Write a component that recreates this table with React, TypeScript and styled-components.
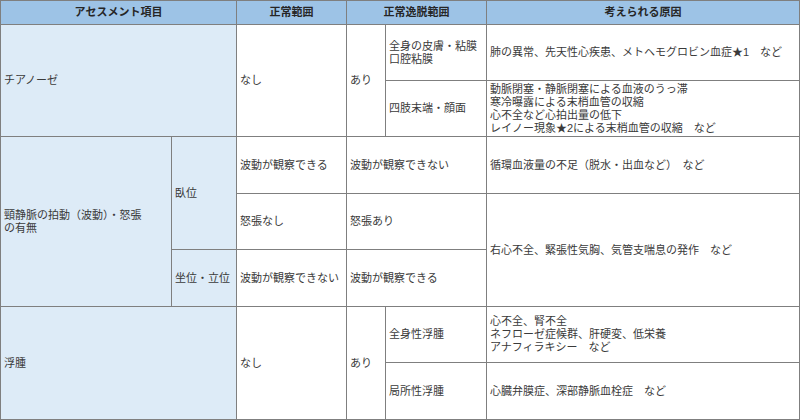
import React from "react";
import styled, { createGlobalStyle } from "styled-components";

const Global = createGlobalStyle`
  html, body { margin: 0; padding: 0; background: #ffffff; }
  body {
    font-family: "Liberation Sans", "Noto Sans CJK JP", sans-serif;
    color: #3a3a3a;
  }
`;

const Grid = styled.div`
  display: grid;
  width: 800px;
  box-sizing: border-box;
  padding: 1px;
  gap: 1px;
  background: #7f7f7f;
  grid-template-columns: 170px 64px 109px 38px 100px 312px;
  grid-template-rows: 23px 55px 55px 56px 55px 56px 55px 56px;
`;

type CellProps = { $col: string; $row: string; $tone?: "head" | "item" | "plain" };

const Cell = styled.div<CellProps>`
  grid-column: ${(p) => p.$col};
  grid-row: ${(p) => p.$row};
  display: flex;
  align-items: center;
  box-sizing: border-box;
  padding: 0 3px;
  font-size: 11px;
  line-height: 13px;
  white-space: nowrap;
  background: ${(p) =>
    p.$tone === "head" ? "#9dc3e6" : p.$tone === "item" ? "#ddebf7" : "#ffffff"};
`;

const Head = styled(Cell)`
  justify-content: center;
  font-weight: 700;
  color: #262626;
`;

const Lines = styled.div`
  display: flex;
  flex-direction: column;
`;

export default function App() {
  return (
    <>
      <Global />
      <Grid>
        <Head $col="1 / 3" $row="1" $tone="head">アセスメント項目</Head>
        <Head $col="3" $row="1" $tone="head">正常範囲</Head>
        <Head $col="4 / 6" $row="1" $tone="head">正常逸脱範囲</Head>
        <Head $col="6" $row="1" $tone="head">考えられる原因</Head>

        <Cell $col="1 / 3" $row="2 / 4" $tone="item">チアノーゼ</Cell>
        <Cell $col="3" $row="2 / 4">なし</Cell>
        <Cell $col="4" $row="2 / 4">あり</Cell>
        <Cell $col="5" $row="2">
          <Lines>
            <span>全身の皮膚・粘膜</span>
            <span>口腔粘膜</span>
          </Lines>
        </Cell>
        <Cell $col="6" $row="2">肺の異常、先天性心疾患、メトヘモグロビン血症★1　など</Cell>
        <Cell $col="5" $row="3">四肢末端・顔面</Cell>
        <Cell $col="6" $row="3">
          <Lines>
            <span>動脈閉塞・静脈閉塞による血液のうっ滞</span>
            <span>寒冷曝露による末梢血管の収縮</span>
            <span>心不全など心拍出量の低下</span>
            <span>レイノー現象★2による末梢血管の収縮　など</span>
          </Lines>
        </Cell>

        <Cell $col="1" $row="4 / 7" $tone="item">
          <Lines>
            <span>頸静脈の拍動（波動）・怒張</span>
            <span>の有無</span>
          </Lines>
        </Cell>
        <Cell $col="2" $row="4 / 6" $tone="item">臥位</Cell>
        <Cell $col="3" $row="4">波動が観察できる</Cell>
        <Cell $col="4 / 6" $row="4">波動が観察できない</Cell>
        <Cell $col="6" $row="4">循環血液量の不足（脱水・出血など）　など</Cell>
        <Cell $col="3" $row="5">怒張なし</Cell>
        <Cell $col="4 / 6" $row="5">怒張あり</Cell>
        <Cell $col="6" $row="5 / 7">右心不全、緊張性気胸、気管支喘息の発作　など</Cell>
        <Cell $col="2" $row="6" $tone="item">坐位・立位</Cell>
        <Cell $col="3" $row="6">波動が観察できない</Cell>
        <Cell $col="4 / 6" $row="6">波動が観察できる</Cell>

        <Cell $col="1 / 3" $row="7 / 9" $tone="item">浮腫</Cell>
        <Cell $col="3" $row="7 / 9">なし</Cell>
        <Cell $col="4" $row="7 / 9">あり</Cell>
        <Cell $col="5" $row="7">全身性浮腫</Cell>
        <Cell $col="6" $row="7">
          <Lines>
            <span>心不全、腎不全</span>
            <span>ネフローゼ症候群、肝硬変、低栄養</span>
            <span>アナフィラキシー　など</span>
          </Lines>
        </Cell>
        <Cell $col="5" $row="8">局所性浮腫</Cell>
        <Cell $col="6" $row="8">心臓弁膜症、深部静脈血栓症　など</Cell>
      </Grid>
    </>
  );
}
